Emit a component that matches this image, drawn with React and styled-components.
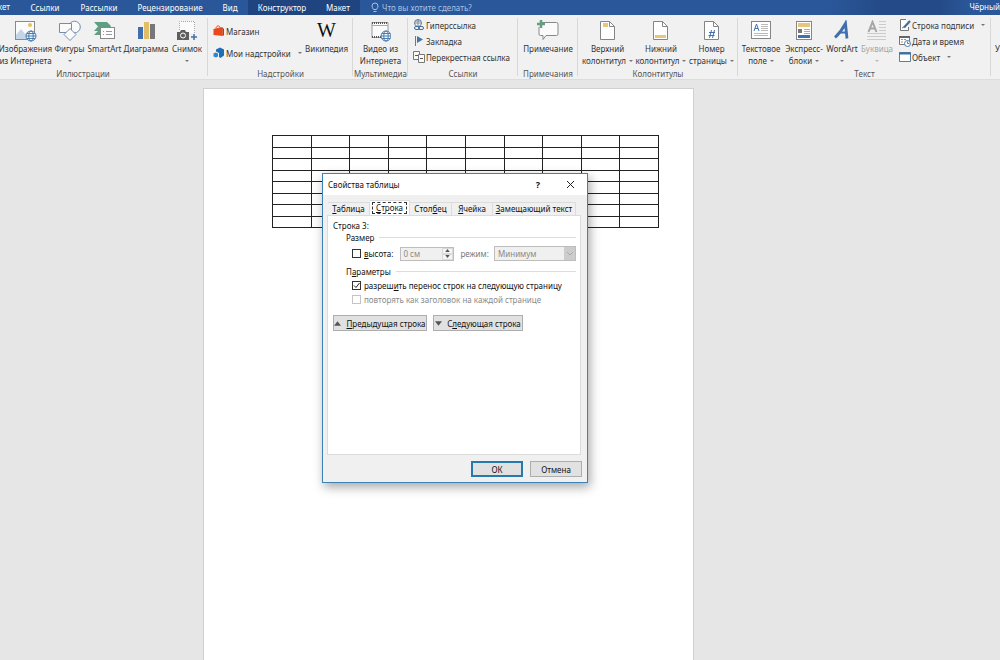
import React, { useState } from "react";
import styled, { createGlobalStyle, css } from "styled-components";

const GlobalStyle = createGlobalStyle`
  * {
    box-sizing: border-box;
  }

  body {
    margin: 0;
    font-family: "Noto Sans", "Open Sans", sans-serif;
    font-size: 8px;
    color: #333;
    background: #e6e6e6;
    overflow: hidden;
  }

  button,
  input,
  select {
    font: inherit;
    color: inherit;
    margin: 0;
    padding: 0;
  }
`;

const Window = styled.div`
  display: flex;
  flex-direction: column;
  min-height: 100vh;
`;

const TabBar = styled.nav`
  display: flex;
  height: 15px;
  color: #fff;
  background: linear-gradient(
    to right,
    #2a579a 83%,
    #244b87 88%,
    #244b87 94%,
    #2a579a 97%
  );
  overflow: hidden;
`;

const RibbonTab = styled.button`
  flex: none;
  width: ${(props) => props.$width}px;
  border: 0;
  line-height: 14px;
  white-space: nowrap;
  color: #fff;
  background: ${(props) => (props.$context ? "#1f4480" : "transparent")};

  &:first-child {
    display: flex;
    justify-content: flex-end;
    padding-right: 10px;
  }
`;

const TellMe = styled.button`
  display: flex;
  align-items: center;
  gap: 3px;
  margin-left: 11px;
  border: 0;
  line-height: 14px;
  color: #a9c0e2;
  background: transparent;
`;

const UserName = styled.span`
  margin-left: auto;
  line-height: 14px;
`;

const Ribbon = styled.div`
  display: flex;
  height: 65px;
  background: #f1f1f1;
  border-bottom: 1px solid #dcdcdc;
  overflow: hidden;
`;

const GroupBox = styled.section`
  flex: none;
  display: flex;
  flex-direction: column;
  width: ${(props) => props.$width}px;
  margin-left: ${(props) => -(props.$hidden || 0)}px;
  padding-top: 2px;
  position: relative;

  &::after {
    content: "";
    position: absolute;
    right: 0;
    top: 3px;
    bottom: 3px;
    border-right: 1px solid #d8d8d8;
  }
`;

const GroupItems = styled.div`
  display: flex;
  flex: 1;
  justify-content: ${(props) => props.$justify || "flex-start"};
  padding-right: ${(props) => props.$end || 0}px;
`;

const GroupTitle = styled.div`
  height: 11px;
  line-height: 11px;
  text-align: center;
  white-space: nowrap;
  color: #555;
`;

const BigButtonBox = styled.button`
  flex: none;
  display: flex;
  flex-direction: column;
  align-items: center;
  width: ${(props) => props.$width}px;
  border: 0;
  background: transparent;
  line-height: 12px;
  white-space: nowrap;
  color: ${(props) => (props.$muted ? "#a5a5a5" : "#333")};

  & > svg {
    flex: none;
    margin: 3px 0 1px;
  }
`;

const LabelLine = styled.span`
  display: flex;
  align-items: center;
  justify-content: center;
  gap: 3px;
  height: 12px;
`;

const ArrowDown = styled.span`
  border: 2px solid transparent;
  border-top-color: ${(props) => (props.$muted ? "#bbb" : "#777")};
  border-bottom: 0;
`;

const SmallList = styled.div`
  display: flex;
  flex-direction: column;
  padding: ${(props) => (props.$loose ? "6px 0 0 5px" : "0 0 0 5px")};
  gap: ${(props) => (props.$loose ? 6 : 0)}px;
`;

const SmallButton = styled.button`
  display: flex;
  align-items: center;
  gap: 1px;
  height: 16px;
  border: 0;
  white-space: nowrap;
  background: transparent;

  & > ${ArrowDown} {
    margin-left: 6px;
  }
`;

const NextGroup = styled.div`
  flex: none;
  padding: 28px 0 0 4px;
  line-height: 12px;
`;

const Workspace = styled.main`
  flex: 1;
  display: flex;
  position: relative;
  padding: 8px 0 0 203px;
`;

const Page = styled.div`
  width: 491px;
  padding: 46px 34px 0 68px;
  background: #fff;
  border: 1px solid #d0d0d0;
  border-bottom: 0;
`;

const DocTable = styled.table`
  width: 387px;
  height: 93px;
  border-collapse: collapse;
  table-layout: fixed;

  td {
    padding: 0;
    border: 1px solid #222;
  }
`;

const Dialog = styled.form`
  position: absolute;
  top: 93px;
  left: 322px;
  width: 266px;
  padding-bottom: 5px;
  color: #111;
  background: #f0f0f0;
  border: 1px solid #3c82b5;
  box-shadow: 2px 4px 10px rgba(0, 0, 0, 0.35);
`;

const TitleBar = styled.header`
  display: flex;
  align-items: center;
  height: 21px;
  padding: 0 11px 0 5px;
  background: #fff;
`;

const DialogTitle = styled.h1`
  flex: 1;
  margin: 0;
  font-size: 8px;
  font-weight: 400;
`;

const TitleButton = styled.button`
  display: flex;
  justify-content: center;
  width: 12px;
  margin-left: 20px;
  border: 0;
  font-size: 9px;
  font-weight: 700;
  background: transparent;
`;

const DialogTabs = styled.div`
  display: flex;
  align-items: flex-end;
  height: 20px;
  padding: 0 4px 0 5px;
`;

const DialogTab = styled.button`
  width: ${(props) => props.$width}px;
  height: 13px;
  border: 1px solid #dcdcdc;
  border-left-width: 0;
  border-bottom: 0;
  line-height: 12px;
  white-space: nowrap;
  background: #f0f0f0;

  ${(props) =>
    props.$active &&
    css`
      height: 15px;
      padding: 1px 2px;
      background: #fff;

      & > span {
        display: block;
        border: 1px dashed #333;
        line-height: 10px;
      }
    `}
`;

const Panel = styled.div`
  height: 240px;
  margin: 0 6px 0 4px;
  padding: 4px 4px 0 5px;
  background: #fff;
  border: 1px solid #dcdcdc;
`;

const RowTitle = styled.div`
  height: 12px;
  line-height: 12px;
`;

const Section = styled.fieldset`
  margin: 0 0 2px 13px;
  padding: 0;
  border: 0;
  min-width: 0;
`;

const SectionTitle = styled.legend`
  display: flex;
  align-items: center;
  gap: 5px;
  width: 100%;
  height: 11px;
  padding: 0;

  &::after {
    content: "";
    flex: 1;
    border-top: 1px solid #dcdcdc;
  }
`;

const FieldRow = styled.div`
  display: flex;
  align-items: center;
  height: ${(props) => props.$height}px;
  padding-left: 6px;
`;

const CheckLabel = styled.label`
  display: flex;
  align-items: center;
  gap: 3px;
  white-space: nowrap;
  color: ${(props) => (props.$disabled ? "#8a8a8a" : "inherit")};
`;

const CheckBox = styled.input`
  appearance: none;
  width: 9px;
  height: 9px;
  border: 1px solid #333;
  background: #fff;

  &:disabled {
    border-color: #c4c4c4;
  }
`;

const CheckWrap = styled.span`
  display: grid;

  & > * {
    grid-area: 1 / 1;
  }

  & > svg {
    pointer-events: none;
  }
`;

const Spinner = styled.div`
  display: flex;
  width: 54px;
  height: 14px;
  margin-left: 7px;
  background: #f0f0f0;
  border: 1px solid #bdbdbd;
`;

const SpinnerInput = styled.input`
  flex: 1;
  min-width: 0;
  padding-left: 2px;
  border: 0;
  color: #888;
  background: transparent;
`;

const SpinnerArrows = styled.div`
  display: flex;
  flex-direction: column;
  width: 11px;
`;

const SpinnerArrow = styled.button`
  flex: 1;
  display: flex;
  align-items: center;
  justify-content: center;
  min-height: 0;
  border: 1px solid #dadada;
  background: #f5f5f5;
`;

const ModeLabel = styled.label`
  margin-left: 6px;
  color: #777;
`;

const SelectWrap = styled.div`
  display: grid;
  width: 82px;
  height: 15px;
  margin-left: auto;

  & > * {
    grid-area: 1 / 1;
  }

  & > svg {
    justify-self: end;
    pointer-events: none;
  }
`;

const ModeSelect = styled.select`
  appearance: none;
  width: 100%;
  padding-left: 3px;
  border: 1px solid #bdbdbd;
  border-radius: 0;
  color: #888;
  background: #f0f0f0;
  opacity: 1;
`;

const PushButton = styled.button`
  display: flex;
  align-items: center;
  justify-content: center;
  gap: 5px;
  width: ${(props) => props.$width}px;
  height: ${(props) => props.$height || 16}px;
  border: ${(props) =>
    props.$default ? "2px solid #2679ac" : "1px solid #adadad"};
  white-space: nowrap;
  background: #e1e1e1;
`;

const RowButtons = styled.div`
  display: flex;
  gap: 6px;
  margin-top: 10px;
`;

const DialogFooter = styled.footer`
  display: flex;
  justify-content: flex-end;
  gap: 7px;
  padding: 6px 5px 0 0;
`;

const PhotoIcon = () => (
  <svg width="22" height="22" viewBox="0 0 22 22" fill="none">
    <rect x="0.5" y="1.5" width="19" height="18" fill="#fbfbfb" stroke="#8a8a8a" />
    <circle cx="15" cy="5" r="2" fill="#e7c05e" />
    <path d="M1 19V15l5-6 4 5 3-3 3 3v5z" fill="#c5d5e8" />
    <circle cx="16" cy="16" r="5" fill="#f4f8fc" stroke="#4a7cae" />
    <path d="M11 16h10M12 13.5h8M12 18.5h8" stroke="#4a7cae" />
    <ellipse cx="16" cy="16" rx="2.2" ry="5" stroke="#4a7cae" />
  </svg>
);

const ShapesIcon = () => (
  <svg width="22" height="22" viewBox="0 0 22 22" fill="#fafafa" stroke="#6f8fb0">
    <circle cx="15.5" cy="7" r="5.8" />
    <path d="M0.5 3.5h12v9h-12z" />
    <path d="M11 8.5l6 6-6 6-6-6z" stroke="#7890a8" />
  </svg>
);

const SmartArtIcon = () => (
  <svg width="22" height="22" viewBox="0 0 22 22">
    <path d="M0 2h13l4 4-3 5H0l4-4.500z" fill="#5fa083" />
    <path d="M0 15l4-4h4v4z" fill="#5fa083" />
    <rect x="6.500" y="7.500" width="14" height="11" fill="#fff" stroke="#888" />
    <path d="M9 11.500h1M12 11.500h6M9 14.500h1M12 14.500h6" stroke="#999" />
  </svg>
);

const ChartIcon = () => (
  <svg width="18" height="22" viewBox="0 0 18 22">
    <path d="M1 7h5v12H1z" fill="#3f6fae" />
    <path d="M7 2h5v17H7z" fill="#e3be69" />
    <path d="M13 4h5v15h-5z" fill="#777" />
  </svg>
);

const CameraIcon = () => (
  <svg width="20" height="22" viewBox="0 0 20 22" fill="none">
    <path d="M2.500 10V1.500h15V14" fill="#fbfbfb" stroke="#aaa" strokeDasharray="1 1" />
    <path d="M0 12h3l1-2h4l1 2h3v8H0z" fill="#5e5e5e" />
    <circle cx="6" cy="15.500" r="2.500" fill="#5e5e5e" stroke="#fff" />
    <path d="M17 14v6M14 17h6" stroke="#3f6fae" strokeWidth="1.500" />
  </svg>
);

const StoreIcon = () => (
  <svg width="12" height="12" viewBox="0 0 12 12">
    <path d="M0.500 4L9 2l1 9-9.500-1z" fill="#e8481c" />
    <path d="M9 2l2 2v6l-1 1z" fill="#b93a16" />
    <path d="M3 3.500C3 0.500 6.500 0 7 2.500" fill="none" stroke="#e8481c" />
  </svg>
);

const AddinsIcon = () => (
  <svg width="12" height="12" viewBox="0 0 12 12">
    <path d="M3 2.500L7 0.500l4 2v6L7.500 11 6 10V6L3 4.500z" fill="#1b6fb8" />
    <path d="M0.500 6.500L2.500 5.500l2.500 1v3L3 10.500 0.500 9.500z" fill="#2f86cf" />
  </svg>
);

const WikiMark = styled.span`
  height: 24px;
  margin: 1px 0;
  font-family: "Liberation Serif", serif;
  font-size: 20px;
  line-height: 24px;
  color: #111;
`;

const VideoIcon = () => (
  <svg width="20" height="22" viewBox="0 0 20 22" fill="none">
    <path d="M1 2.500h16v15H1z" fill="#fbfbfb" stroke="#999" />
    <path d="M1 3h16M1 17h12" stroke="#555" strokeWidth="2" strokeDasharray="1 1" />
    <path d="M1 5.500h16" stroke="#aaa" />
    <circle cx="15" cy="16" r="5" fill="#f4f8fc" stroke="#4a7cae" />
    <path d="M10 16h10M11 13.500h8M11 18.500h8" stroke="#4a7cae" />
    <ellipse cx="15" cy="16" rx="2.200" ry="5" stroke="#4a7cae" />
  </svg>
);

const LinkIcon = () => (
  <svg width="12" height="12" viewBox="0 0 12 12" fill="none">
    <circle cx="5" cy="4" r="3.500" stroke="#6a8099" />
    <path d="M1.500 4h7M5 0.500v7M2 2h6" stroke="#6a8099" strokeWidth="0.800" />
    <rect x="1.500" y="7.500" width="5" height="3" rx="1.500" fill="#f1f1f1" stroke="#3f6f9f" />
    <rect x="5.500" y="7.500" width="5" height="3" rx="1.500" stroke="#3f6f9f" />
  </svg>
);

const FlagIcon = () => (
  <svg width="12" height="12" viewBox="0 0 12 12">
    <path d="M2.500 1v10" stroke="#777" />
    <path d="M4 1l6 3.500L4 8z" fill="#4377ab" />
  </svg>
);

const CrossRefIcon = () => (
  <svg width="12" height="12" viewBox="0 0 12 12" fill="#fafafa" stroke="#777">
    <path d="M0.500 0.500h6v8h-6z" />
    <path d="M5.500 3.500h6v8h-6z" />
    <path d="M2 4.500h3M7 7.500h3" stroke="#555" />
  </svg>
);

const CommentIcon = () => (
  <svg width="22" height="22" viewBox="0 0 22 22">
    <path
      d="M4 2.500h15.500q1.500 0 1.500 1.500v10q0 1.500-1.500 1.500H9l-3 4v-4H3.500Q2 15.500 2 14V7"
      fill="#fbfbfb"
      stroke="#888"
    />
    <path d="M4 0v8M0 4h8" stroke="#5fa083" strokeWidth="2.500" />
  </svg>
);

const DocIcon = ({ kind }) => (
  <svg width="16" height="22" viewBox="0 0 16 22">
    <path d="M0.500 1.500h9l5 5v13h-14z" fill="#fff" stroke="#858585" />
    <path d="M9.500 1.500v5h5" fill="none" stroke="#858585" />
    {kind === "header" && <path d="M3 3h5v4H3z" fill="#e7c679" />}
    {kind === "footer" && <path d="M2 15h11v3H2z" fill="#e7c679" />}
    {kind === "number" && (
      <path
        d="M7.500 10l-2 8M10.500 10l-2 8M5 12.500h6M4.500 15.500h6"
        fill="none"
        stroke="#3f6fae"
      />
    )}
  </svg>
);

const TextBoxIcon = () => (
  <svg width="20" height="22" viewBox="0 0 20 22" fill="none">
    <rect x="0.500" y="1.500" width="19" height="17" fill="#fff" stroke="#858585" />
    <path d="M3 11l2.500-7L8 11M4 8.500h3" stroke="#3f6fae" />
    <path d="M10 4.500h7M10 6.500h7M10 8.500h7M10 10.500h7M3 13.500h14M3 15.500h14" stroke="#bbb" />
  </svg>
);

const QuickPartsIcon = () => (
  <svg width="16" height="22" viewBox="0 0 16 22">
    <rect x="0.500" y="1.500" width="15" height="18" fill="#fff" stroke="#858585" />
    <path d="M2 3h12v4H2z" fill="#e7c679" />
    <path d="M2 9h4v4H2z" fill="#777" />
    <path d="M8 9.500h6M8 11.500h6M8 13.500h6" stroke="#aaa" />
    <path d="M2 15h12v3H2z" fill="#3f6fae" />
  </svg>
);

const WordArtIcon = () => (
  <svg width="18" height="22" viewBox="0 0 18 22" fill="none">
    <path d="M2 17.500Q8 12 12.500 3.500L14 18.500" stroke="#3f6fae" strokeWidth="2.800" />
    <path d="M6 12.500h8" stroke="#3f6fae" strokeWidth="2" />
  </svg>
);

const DropCapIcon = () => (
  <svg width="20" height="22" viewBox="0 0 20 22" fill="none">
    <path d="M1.500 12l4-10 4 10M3 8.500h5" stroke="#a5a5a5" strokeWidth="2" />
    <path
      d="M12 1.500h7M12 4.500h7M12 7.500h7M12 10.500h7M0 13.500h19M0 16.500h19M0 19.500h19"
      stroke="#ccc"
    />
  </svg>
);

const SignIcon = () => (
  <svg width="12" height="12" viewBox="0 0 12 12" fill="none">
    <path d="M7 0.500H1.500v11h8V8" fill="#fff" stroke="#777" />
    <path d="M3 9l2-1" stroke="#777" />
    <path d="M5 8.500L11 2" stroke="#3f6f9f" strokeWidth="2.200" />
  </svg>
);

const DateIcon = () => (
  <svg width="12" height="12" viewBox="0 0 12 12" fill="none">
    <path d="M0.500 1.500h10v8h-10z" fill="#fff" stroke="#777" />
    <path d="M0 2h11" stroke="#666" strokeWidth="2" />
    <path d="M2 4.500h2M5 4.500h2M2 7h2" stroke="#c98b3a" />
    <circle cx="8.500" cy="8.500" r="3" fill="#fff" stroke="#4a7cae" />
    <path d="M8.500 6.500v2h2" stroke="#4a7cae" />
  </svg>
);

const ObjectIcon = () => (
  <svg width="12" height="12" viewBox="0 0 12 12">
    <path d="M0.500 1.500h11v9h-11z" fill="#fff" stroke="#587fa8" />
    <path d="M0 2.500h12" stroke="#3f6f9f" strokeWidth="2" />
  </svg>
);

const BulbIcon = () => (
  <svg width="8" height="11" viewBox="0 0 8 11" fill="none" stroke="#a9c0e2">
    <path d="M2.500 7.500Q1 5.500 1 4a3 3 0 0 1 6 0Q7 5.500 5.500 7.500z" />
    <path d="M2.500 9.500h3" />
  </svg>
);

const CloseIcon = () => (
  <svg width="9" height="9" viewBox="0 0 9 9" stroke="#222">
    <path d="M1 1l7 7M8 1l-7 7" />
  </svg>
);

const Tick = () => (
  <svg width="9" height="9" viewBox="0 0 9 9" fill="none" stroke="#222">
    <path d="M2 4.500l2 2L7.500 2" />
  </svg>
);

const Triangle = ({ up, size = 7, color = "#555" }) => (
  <svg width={size} height={size - 2} viewBox="0 0 6 4" fill={color}>
    <path d={up ? "M0 4l3-4 3 4z" : "M0 0h6l-3 4z"} />
  </svg>
);

const SelectArrow = () => (
  <svg width="12" height="15" viewBox="0 0 12 15">
    <path d="M0 1h11v13H0z" fill="#ccc" />
    <path d="M3 6l3 3 3-3" fill="none" stroke="#aaa" />
  </svg>
);

// lines: label rows; an arrow follows the last one, or sits alone under a single row
function BigButton({ icon, lines, width, arrow, muted }) {
  const last = lines.length - 1;
  return (
    <BigButtonBox type="button" $width={width} $muted={muted}>
      {icon}
      {lines.map((line, i) => (
        <LabelLine key={line}>
          {line}
          {arrow && last > 0 && i === last ? <ArrowDown /> : null}
        </LabelLine>
      ))}
      {arrow && last === 0 ? (
        <LabelLine>
          <ArrowDown $muted={muted} />
        </LabelLine>
      ) : null}
    </BigButtonBox>
  );
}

function Group({ title, width, justify, hidden, end, children }) {
  return (
    <GroupBox $width={width} $hidden={hidden}>
      <GroupItems $justify={justify} $end={end}>
        {children}
      </GroupItems>
      <GroupTitle>{title}</GroupTitle>
    </GroupBox>
  );
}

const ribbonTabs = [
  { name: "кет", width: 20 },
  { name: "Ссылки", width: 50 },
  { name: "Рассылки", width: 58 },
  { name: "Рецензирование", width: 84 },
  { name: "Вид", width: 36 },
  { name: "Конструктор", width: 68, context: true },
  { name: "Макет", width: 44, context: true },
];

const dialogTabs = [
  { id: "table", width: 42, label: <><u>Т</u>аблица</> },
  { id: "row", width: 40, label: <><u>С</u>трока</> },
  { id: "column", width: 42, label: <>Стол<u>б</u>ец</> },
  { id: "cell", width: 41, label: <><u>Я</u>чейка</> },
  { id: "alt", width: 83, label: <><u>З</u>амещающий текст</> },
];

function RibbonPanel() {
  return (
    <Ribbon>
      <Group title="Иллюстрации" width={250} hidden={42} justify="flex-end" end={5}>
        <BigButton icon={<PhotoIcon />} lines={["Изображения", "из Интернета"]} width={51} />
        <BigButton icon={<ShapesIcon />} lines={["Фигуры"]} width={37} arrow />
        <BigButton icon={<SmartArtIcon />} lines={["SmartArt"]} width={33} />
        <BigButton icon={<ChartIcon />} lines={["Диаграмма"]} width={50} />
        <BigButton icon={<CameraIcon />} lines={["Снимок"]} width={32} arrow />
      </Group>
      <Group title="Надстройки" width={145} justify="space-between" end={4}>
        <SmallList $loose>
          <SmallButton type="button">
            <StoreIcon />
            Магазин
          </SmallButton>
          <SmallButton type="button">
            <AddinsIcon />
            Мои надстройки
            <ArrowDown />
          </SmallButton>
        </SmallList>
        <BigButton icon={<WikiMark>W</WikiMark>} lines={["Википедия"]} width={45} />
      </Group>
      <Group title="Мультимедиа" width={55} justify="center">
        <BigButton icon={<VideoIcon />} lines={["Видео из", "Интернета"]} width={53} />
      </Group>
      <Group title="Ссылки" width={110}>
        <SmallList>
          <SmallButton type="button">
            <LinkIcon />
            Гиперссылка
          </SmallButton>
          <SmallButton type="button">
            <FlagIcon />
            Закладка
          </SmallButton>
          <SmallButton type="button">
            <CrossRefIcon />
            Перекрестная ссылка
          </SmallButton>
        </SmallList>
      </Group>
      <Group title="Примечания" width={60} justify="center">
        <BigButton icon={<CommentIcon />} lines={["Примечание"]} width={58} />
      </Group>
      <Group title="Колонтитулы" width={160} justify="center">
        <BigButton icon={<DocIcon kind="header" />} lines={["Верхний", "колонтитул"]} width={54} arrow />
        <BigButton icon={<DocIcon kind="footer" />} lines={["Нижний", "колонтитул"]} width={53} arrow />
        <BigButton icon={<DocIcon kind="number" />} lines={["Номер", "страницы"]} width={48} arrow />
      </Group>
      <Group title="Текст" width={253}>
        <BigButton icon={<TextBoxIcon />} lines={["Текстовое", "поле"]} width={46} arrow />
        <BigButton icon={<QuickPartsIcon />} lines={["Экспресс-", "блоки"]} width={40} arrow />
        <BigButton icon={<WordArtIcon />} lines={["WordArt"]} width={36} arrow />
        <BigButton icon={<DropCapIcon />} lines={["Буквица"]} width={34} arrow muted />
        <SmallList>
          <SmallButton type="button">
            <SignIcon />
            Строка подписи
            <ArrowDown />
          </SmallButton>
          <SmallButton type="button">
            <DateIcon />
            Дата и время
          </SmallButton>
          <SmallButton type="button">
            <ObjectIcon />
            Объект
            <ArrowDown />
          </SmallButton>
        </SmallList>
      </Group>
      <NextGroup>У</NextGroup>
    </Ribbon>
  );
}

function TableProperties() {
  const [tab, setTab] = useState("row");
  const [hasHeight, setHasHeight] = useState(false);
  const [allowBreak, setAllowBreak] = useState(true);

  return (
    <Dialog role="dialog" aria-labelledby="dialog-title" onSubmit={(e) => e.preventDefault()}>
      <TitleBar>
        <DialogTitle id="dialog-title">Свойства таблицы</DialogTitle>
        <TitleButton type="button">?</TitleButton>
        <TitleButton type="button">
          <CloseIcon />
        </TitleButton>
      </TitleBar>
      <DialogTabs>
        {dialogTabs.map(({ id, width, label }) => (
          <DialogTab
            key={id}
            type="button"
            $width={width}
            $active={tab === id}
            onClick={() => setTab(id)}
          >
            <span>{label}</span>
          </DialogTab>
        ))}
      </DialogTabs>
      <Panel>
        <RowTitle>Строка 3:</RowTitle>
        <Section>
          <SectionTitle>Размер</SectionTitle>
          <FieldRow $height={21}>
            <CheckLabel>
              <CheckBox
                type="checkbox"
                checked={hasHeight}
                onChange={() => setHasHeight((pre) => !pre)}
              />
              <span><u>в</u>ысота:</span>
            </CheckLabel>
            <Spinner>
              <SpinnerInput
                type="text"
                aria-label="высота"
                defaultValue="0 см"
                disabled={!hasHeight}
              />
              <SpinnerArrows>
                <SpinnerArrow type="button">
                  <Triangle up size={5} />
                </SpinnerArrow>
                <SpinnerArrow type="button">
                  <Triangle size={5} />
                </SpinnerArrow>
              </SpinnerArrows>
            </Spinner>
            <ModeLabel htmlFor="mode">режим:</ModeLabel>
            <SelectWrap>
              <ModeSelect id="mode" disabled={!hasHeight}>
                <option>Минимум</option>
              </ModeSelect>
              <SelectArrow />
            </SelectWrap>
          </FieldRow>
        </Section>
        <Section>
          <SectionTitle>
            <span>П<u>а</u>раметры</span>
          </SectionTitle>
          <FieldRow $height={17}>
            <CheckLabel>
              <CheckWrap>
                <CheckBox
                  type="checkbox"
                  checked={allowBreak}
                  onChange={() => setAllowBreak((pre) => !pre)}
                />
                {allowBreak ? <Tick /> : null}
              </CheckWrap>
              <span>разреш<u>и</u>ть перенос строк на следующую страницу</span>
            </CheckLabel>
          </FieldRow>
          <FieldRow $height={11}>
            <CheckLabel $disabled>
              <CheckBox type="checkbox" disabled />
              повторять как заголовок на каждой странице
            </CheckLabel>
          </FieldRow>
        </Section>
        <RowButtons>
          <PushButton type="button" $width={94}>
            <Triangle up />
            <span><u>П</u>редыдущая строка</span>
          </PushButton>
          <PushButton type="button" $width={90}>
            <Triangle />
            <span>С<u>л</u>едующая строка</span>
          </PushButton>
        </RowButtons>
      </Panel>
      <DialogFooter>
        <PushButton type="submit" $width={52} $default>
          ОК
        </PushButton>
        <PushButton type="button" $width={52}>
          Отмена
        </PushButton>
      </DialogFooter>
    </Dialog>
  );
}

function App() {
  return (
    <Window>
      <GlobalStyle />
      <TabBar>
        {ribbonTabs.map(({ name, width, context }) => (
          <RibbonTab key={name} type="button" $width={width} $context={context}>
            {name}
          </RibbonTab>
        ))}
        <TellMe type="button">
          <BulbIcon />
          Что вы хотите сделать?
        </TellMe>
        <UserName>Чёрный</UserName>
      </TabBar>
      <RibbonPanel />
      <Workspace>
        <Page>
          <DocTable>
            <tbody>
              {Array.from({ length: 8 }, (_, row) => (
                <tr key={row}>
                  {Array.from({ length: 10 }, (_, col) => (
                    <td key={col} />
                  ))}
                </tr>
              ))}
            </tbody>
          </DocTable>
        </Page>
        <TableProperties />
      </Workspace>
    </Window>
  );
}

export default App;
